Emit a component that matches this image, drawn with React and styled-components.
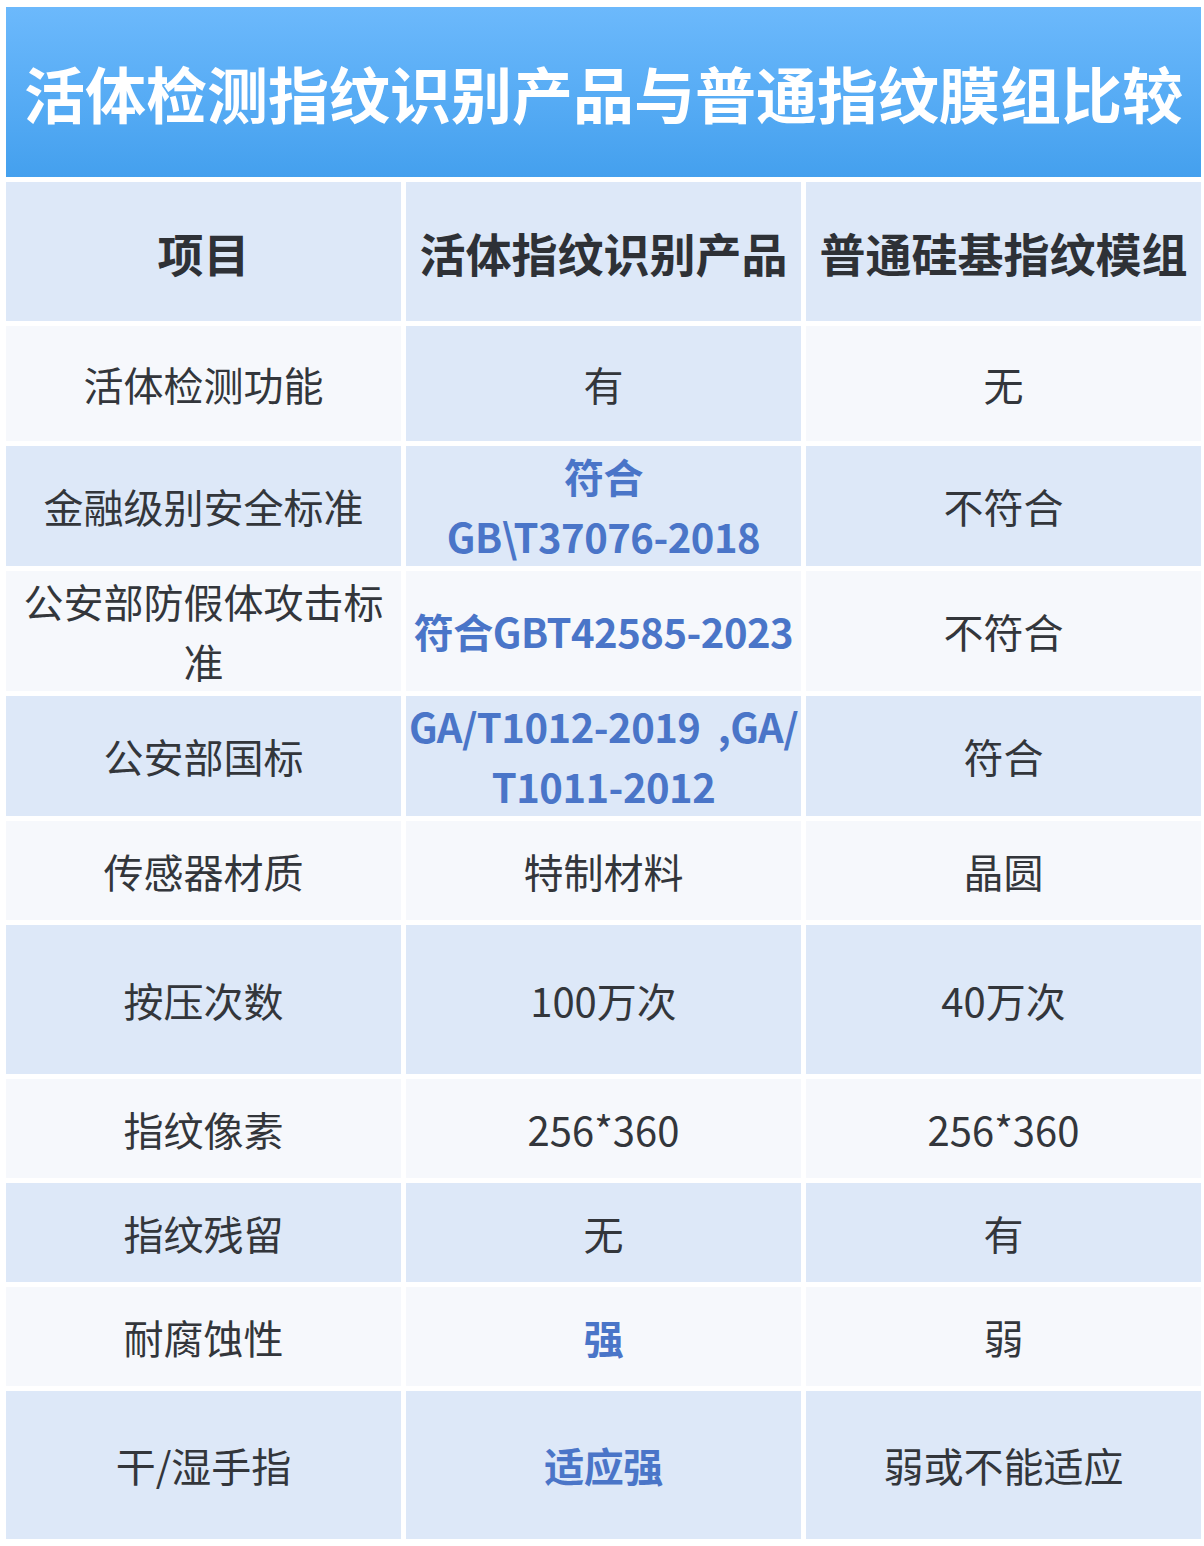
import React from 'react'
import styled, { createGlobalStyle } from 'styled-components'

const GlobalStyle = createGlobalStyle`
  html, body {
    margin: 0;
    padding: 0;
    background: #ffffff;
  }
  body {
    font-family: "Noto Sans CJK SC", "Noto Sans", sans-serif;
  }
`

const BLUE_CELL = '#dde8f8'
const LIGHT_CELL = '#f6f8fc'

const Page = styled.div`
  width: 1195px;
  padding: 7px 3px 7px 6px;
  display: flex;
  flex-direction: column;
  gap: 5px;
`

const Banner = styled.div`
  height: 170px;
  background: linear-gradient(180deg, #6cb9fc 0%, #44a0ee 100%);
  display: flex;
  align-items: center;
  justify-content: center;
`

const Title = styled.h1`
  margin: 0;
  color: #ffffff;
  font-size: 61px;
  font-weight: 700;
  line-height: 1;
  white-space: nowrap;
`

const Table = styled.div`
  display: flex;
  flex-direction: column;
  gap: 5px;
`

const Row = styled.div`
  display: grid;
  grid-template-columns: repeat(3, 395px);
  column-gap: 5px;
  height: ${(props) => props.height}px;
`

const Cell = styled.div`
  background-color: ${(props) => props.bg};
  display: flex;
  align-items: center;
  justify-content: center;
  text-align: center;
  padding: 0 6px;
  font-size: 40px;
  line-height: 60px;
  color: #33363b;
  white-space: pre-line;
`

const HeadCell = styled(Cell)`
  font-size: 46px;
  font-weight: 600;
  color: #2e3136;
  white-space: nowrap;
`

const Strong = styled.span`
  color: #4a75c8;
  font-weight: 600;
  letter-spacing: -0.5px;
  white-space: pre;
`

const rows = [
  { h: 115, bg: [LIGHT_CELL, BLUE_CELL, LIGHT_CELL], cells: ['活体检测功能', '有', '无'] },
  { h: 120, bg: 'b', cells: ['金融级别安全标准', { s: '符合\nGB\\T37076-2018' }, '不符合'] },
  { h: 120, bg: 'l', cells: ['公安部防假体攻击标准', { s: '符合GBT42585-2023' }, '不符合'] },
  { h: 120, bg: 'b', cells: ['公安部国标', { s: 'GA/T1012-2019\u00a0\u00a0,GA/\nT1011-2012' }, '符合'] },
  { h: 99, bg: 'l', cells: ['传感器材质', '特制材料', '晶圆'] },
  { h: 149, bg: 'b', cells: ['按压次数', '100万次', '40万次'] },
  { h: 99, bg: 'l', cells: ['指纹像素', '256*360', '256*360'] },
  { h: 99, bg: 'b', cells: ['指纹残留', '无', '有'] },
  { h: 99, bg: 'l', cells: ['耐腐蚀性', { s: '强' }, '弱'] },
  { h: 148, bg: 'b', cells: ['干/湿手指', { s: '适应强' }, '弱或不能适应'] },
]

function cellBg(bg, i) {
  if (Array.isArray(bg)) return bg[i]
  return bg === 'b' ? BLUE_CELL : LIGHT_CELL
}

export default function App() {
  return (
    <>
      <GlobalStyle />
      <Page>
        <Banner>
          <Title>活体检测指纹识别产品与普通指纹膜组比较</Title>
        </Banner>
        <Table>
          <Row height={139}>
            <HeadCell bg={BLUE_CELL}>项目</HeadCell>
            <HeadCell bg={BLUE_CELL}>活体指纹识别产品</HeadCell>
            <HeadCell bg={BLUE_CELL}>普通硅基指纹模组</HeadCell>
          </Row>
          {rows.map((row, r) => (
            <Row key={r} height={row.h}>
              {row.cells.map((c, i) => (
                <Cell key={i} bg={cellBg(row.bg, i)}>
                  {typeof c === 'string' ? c : <Strong>{c.s}</Strong>}
                </Cell>
              ))}
            </Row>
          ))}
        </Table>
      </Page>
    </>
  )
}
